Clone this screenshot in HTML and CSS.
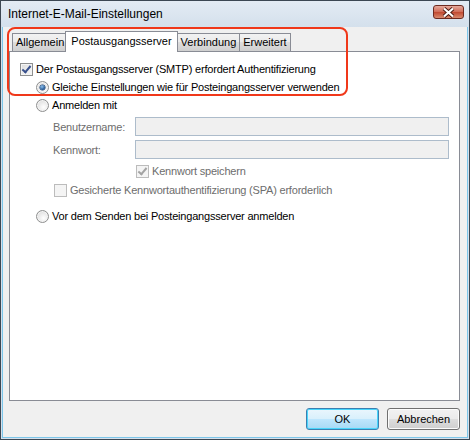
FILE: index.html
```html
<!DOCTYPE html>
<html lang="de">
<head>
    <meta charset="UTF-8">
    <title>Internet-E-Mail-Einstellungen</title>
    <link rel="stylesheet" href="styles.css">
</head>
<body>
    <div class="window">
        <div class="titlebar">
            <span class="title">Internet-E-Mail-Einstellungen</span>
            <span class="close">
                <svg width="15" height="11" viewBox="0 0 15 11">
                    <path d="M3 1.5 L12 9.5 M12 1.5 L3 9.5" stroke="#4a1a12" stroke-width="4" fill="none"/>
                    <path d="M3 1.5 L12 9.5 M12 1.5 L3 9.5" stroke="#fff" stroke-width="2.2" fill="none"/>
                </svg>
            </span>
        </div>

        <div class="client">
            <div class="tabs">
                <div class="tab">Allgemein</div>
                <div class="tab active">Postausgangsserver</div>
                <div class="tab">Verbindung</div>
                <div class="tab">Erweitert</div>
            </div>

            <div class="panel">
                <label class="row">
                    <span class="check checked"></span>
                    Der Postausgangsserver (SMTP) erfordert Authentifizierung
                </label>
                <label class="row indent1">
                    <span class="radio selected"></span>
                    Gleiche Einstellungen wie für Posteingangsserver verwenden
                </label>
                <label class="row indent1">
                    <span class="radio"></span>
                    Anmelden mit
                </label>

                <div class="field-row first">
                    <span class="field-label">Benutzername:</span>
                    <span class="field"></span>
                </div>
                <div class="field-row">
                    <span class="field-label">Kennwort:</span>
                    <span class="field"></span>
                </div>

                <label class="row indent3 disabled">
                    <span class="check checked off"></span>
                    Kennwort speichern
                </label>
                <label class="row indent2 disabled">
                    <span class="check off"></span>
                    Gesicherte Kennwortauthentifizierung (SPA) erforderlich
                </label>
                <label class="row indent1 last">
                    <span class="radio"></span>
                    Vor dem Senden bei Posteingangsserver anmelden
                </label>
            </div>

            <div class="actions">
                <button class="btn default">OK</button>
                <button class="btn">Abbrechen</button>
            </div>
        </div>

        <!-- Markierung im Screenshot -->
        <div class="highlight"></div>
    </div>
</body>
</html>
```

FILE: styles.css
```css
body {
    margin: 0;
    font-family: "Liberation Sans", Arial, sans-serif;
    font-size: 11px;
    letter-spacing: -0.2px;
    color: #000;
}

.window {
    position: relative;
    width: 470px;
    height: 440px;
    box-sizing: border-box;
    border: 1px solid #3c4753;
    padding: 0 1px 1px;
    background: linear-gradient(#e3ebf4, #d4e0ec 26px);
    display: flex;
    flex-direction: column;
}

.titlebar {
    height: 26px;
    display: flex;
    align-items: center;
    padding: 0 4px 0 6px;
}

.title {
    flex: 1;
    font-size: 12px;
    letter-spacing: 0;
    margin-top: -1px;
}

.close {
    width: 29px;
    height: 12px;
    margin-top: -4px;
    border: 1px solid #6d2a20;
    border-radius: 3px;
    background: linear-gradient(#e6a99c, #cf6a55 50%, #c0472f 51%, #d88a6e);
    display: flex;
    align-items: center;
    justify-content: center;
}

.client {
    flex: 1;
    display: flex;
    flex-direction: column;
    border: 1px solid #7cc6ea;
    border-top: none;
    background: #f0f0f0;
    padding: 4px 7px 7px 6px;
}

.tabs {
    display: flex;
    align-items: flex-end;
    height: 20px;
    padding-left: 3px;
}

.tab {
    height: 17px;
    line-height: 17px;
    padding: 0 3px;
    letter-spacing: 0;
    border: 1px solid #898c95;
    border-bottom: none;
    margin-right: -1px;
    background: linear-gradient(#f2f2f2, #ebebeb 45%, #dddddd 50%, #cfcfcf);
}

.tab.active {
    position: relative;
    z-index: 1;
    height: 20px;
    line-height: 18px;
    margin: 0 -1px -1px -2px;
    padding: 0 5px;
    background: #fff;
}

.tab.active + .tab {
    margin-left: 0;
}

.panel {
    flex: 1;
    border: 1px solid #898c95;
    background: #fff;
    padding: 8px 10px 0;
}

.row {
    display: flex;
    align-items: center;
    height: 18px;
    gap: 3px;
}

.indent1 { padding-left: 16px; }
.indent2 { padding-left: 34px; margin-top: 1px; }
.indent3 { padding-left: 116px; margin-top: 3px; }
.row.last { margin-top: 8px; }

.disabled { color: #6d6d6d; }

.field-row {
    display: flex;
    align-items: center;
    margin-top: 4px;
    padding-left: 33px;
}

.field-row.first { margin-top: 3px; }

.field-label {
    width: 82px;
    color: #6d6d6d;
}

.field {
    width: 316px;
    height: 19px;
    box-sizing: border-box;
    border: 1px solid #adbccb;
    background: #f0f0f0;
}

.check,
.radio {
    position: relative;
    flex: none;
    width: 13px;
    height: 13px;
    box-sizing: border-box;
    border: 1px solid #8e8f8f;
    background: linear-gradient(135deg, #dcdcdc, #f8f8f8);
    box-shadow: inset 0 0 0 1px #f4f4f4;
}

.radio {
    border-radius: 50%;
    background: radial-gradient(circle at 60% 65%, #ffffff, #d4d4d4);
}

.radio.selected::after {
    content: "";
    position: absolute;
    left: 3px;
    top: 3px;
    width: 5px;
    height: 5px;
    border-radius: 50%;
    background: radial-gradient(circle at 40% 35%, #8ec2f0, #1c4f8c 70%);
    box-shadow: 0 0 0 0.5px #123a6c;
}

.check.checked::after {
    content: "";
    position: absolute;
    left: 3px;
    top: 0px;
    width: 3px;
    height: 7px;
    border: solid #38508c;
    border-width: 0 2px 2px 0;
    transform: rotate(40deg);
}

.check.off {
    border-color: #bcbcbc;
    background: #f4f4f4;
}

.check.off.checked::after {
    border-color: #a3a3a3;
}

.actions {
    display: flex;
    justify-content: flex-end;
    gap: 8px;
    padding-top: 7px;
}

.btn {
    width: 73px;
    height: 22px;
    font-family: inherit;
    font-size: 11px;
    color: #000;
    border: 1px solid #707070;
    border-radius: 3px;
    background: linear-gradient(#f2f2f2, #ebebeb 48%, #dddddd 52%, #cfcfcf);
    box-shadow: inset 0 0 0 1px #fcfcfc;
}

.btn.default {
    border-color: #3c7fb1;
    background: linear-gradient(#eaf6fd, #d9f0fc 48%, #bee6fd 52%, #a7d9f5);
    box-shadow: inset 0 0 0 1px #48d5fb;
}

.highlight {
    position: absolute;
    left: 6px;
    top: 26px;
    width: 341px;
    height: 69px;
    box-sizing: border-box;
    border: 2px solid #f0381a;
    border-radius: 8px;
}
```
